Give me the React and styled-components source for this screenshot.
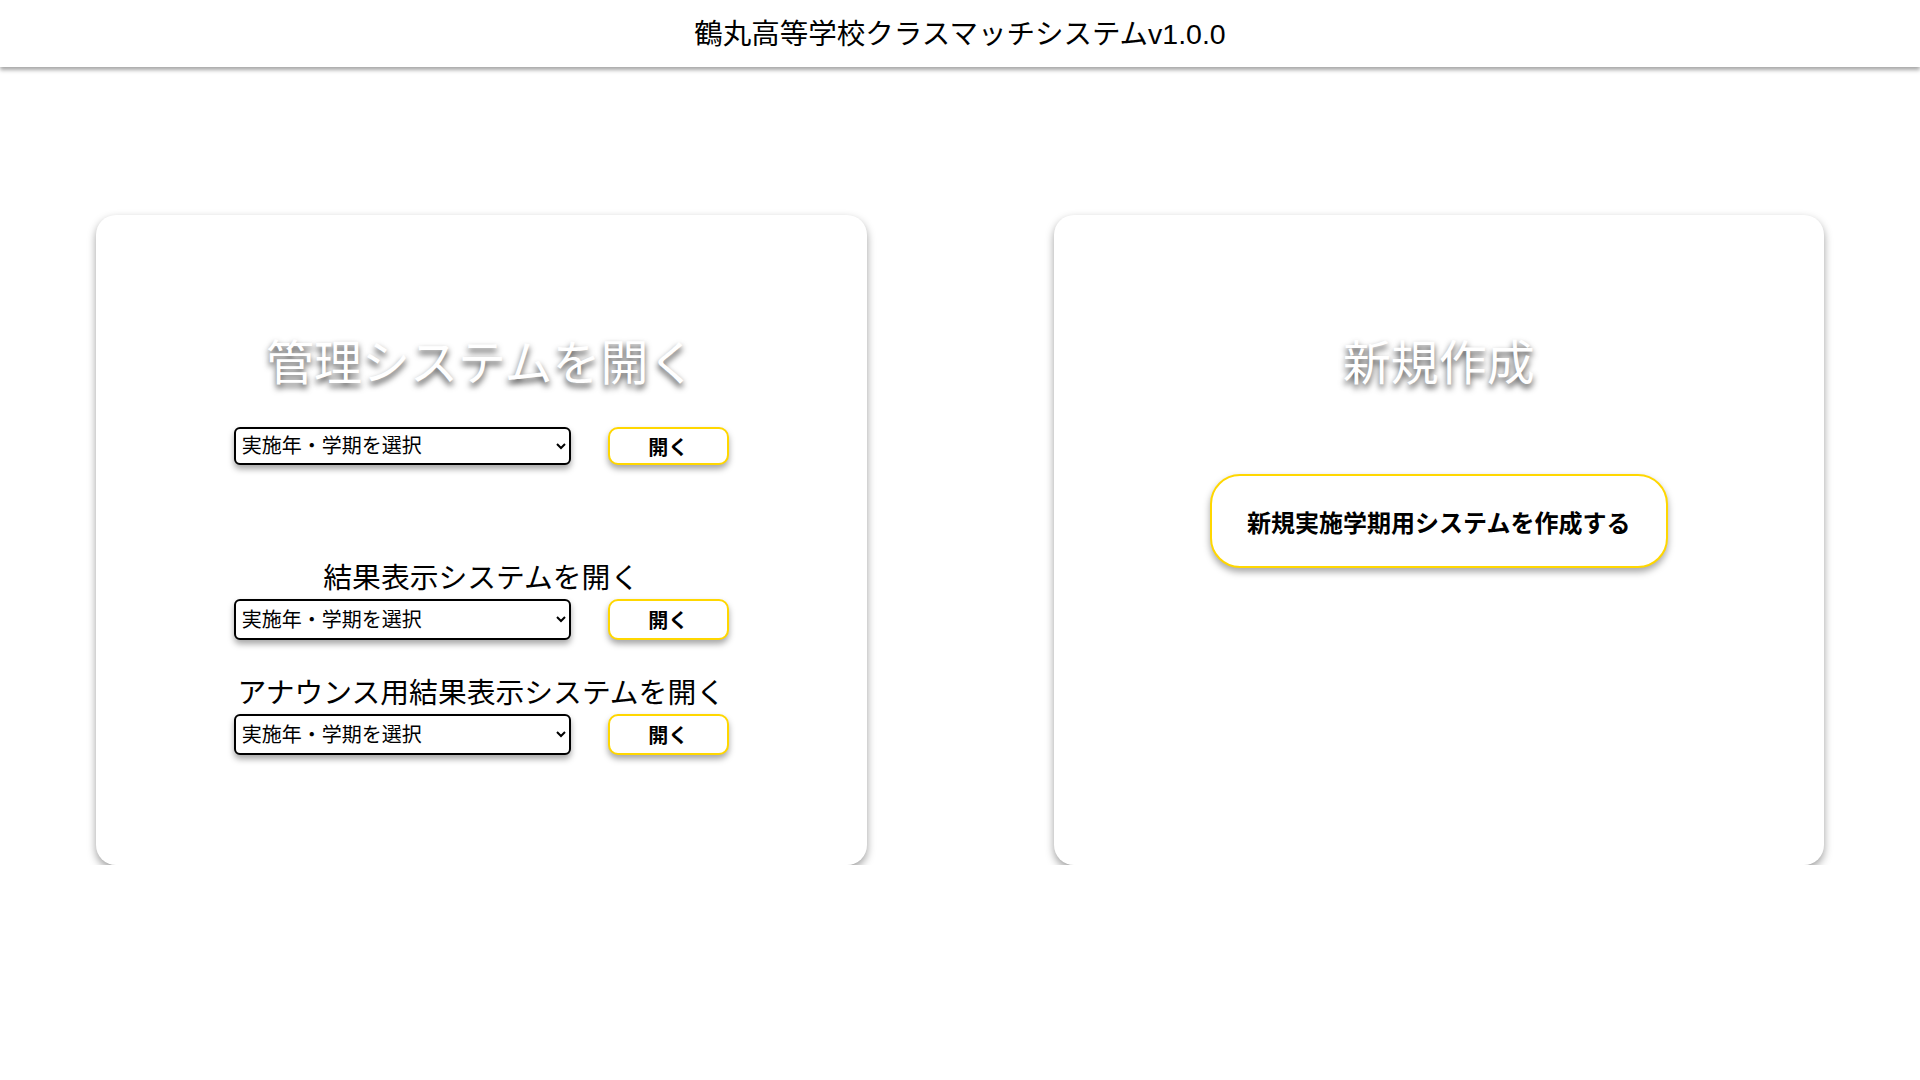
import styled, { createGlobalStyle } from 'styled-components';

const GlobalStyle = createGlobalStyle`
  html, body {
    margin: 0;
    padding: 0;
    background: #fff;
  }
  body {
    font-family: "Liberation Sans", "Noto Sans CJK JP", sans-serif;
    color: #000;
  }
`;

const Header = styled.header`
  height: 67px;
  display: flex;
  align-items: center;
  justify-content: center;
  background: #fff;
  box-shadow: 0 3px 4px rgba(0, 0, 0, 0.35);
`;

const HeaderTitle = styled.h1`
  margin: 0;
  font-size: 28.5px;
  font-weight: 400;
  line-height: 40px;
`;

const Main = styled.main`
  display: flex;
  gap: 187px;
  padding: 148px 96px 0;
`;

const Card = styled.section`
  flex: 1;
  height: 650px;
  box-sizing: border-box;
  padding-top: 114px;
  display: flex;
  flex-direction: column;
  align-items: center;
  background: #fff;
  border-radius: 20px;
  box-shadow: 0 4px 8px rgba(0, 0, 0, 0.38);
`;

const CardTitle = styled.h2`
  margin: 0;
  font-size: 48px;
  font-weight: 400;
  line-height: 70px;
  color: #fff;
  text-shadow: 0 4px 6px rgba(0, 0, 0, 0.75);
`;

const Label = styled.p`
  margin: ${(p) => p.$top}px 0 0;
  font-size: 28.8px;
  line-height: 42px;
`;

const Row = styled.div`
  display: flex;
  gap: 37px;
  margin-top: ${(p) => p.$top || 0}px;
`;

const Select = styled.select`
  width: 337px;
  height: ${(p) => p.$h}px;
  box-sizing: border-box;
  padding: 0 2px;
  font-family: inherit;
  font-size: 20px;
  color: #000;
  background: #fff;
  border: 2px solid #000;
  border-radius: 6px;
  box-shadow: 0 4px 6px rgba(0, 0, 0, 0.35);
`;

const OpenButton = styled.button`
  width: 121px;
  height: ${(p) => p.$h}px;
  box-sizing: border-box;
  font-family: inherit;
  font-size: 20px;
  font-weight: 700;
  color: #000;
  background: #fff;
  border: 2px solid #ffd700;
  border-radius: 10px;
  box-shadow: 0 4px 6px rgba(0, 0, 0, 0.35);
  cursor: pointer;
`;

const CreateButton = styled.button`
  margin-top: 75px;
  width: 458px;
  height: 94px;
  box-sizing: border-box;
  font-family: inherit;
  font-size: 24px;
  font-weight: 700;
  color: #000;
  background: #fff;
  border: 2px solid #ffd700;
  border-radius: 30px;
  box-shadow: 0 4px 7px rgba(0, 0, 0, 0.35);
  cursor: pointer;
`;

const OpenRow = ({ h, top }) => (
  <Row $top={top}>
    <Select $h={h} defaultValue="">
      <option value="">実施年・学期を選択</option>
    </Select>
    <OpenButton $h={h}>開く</OpenButton>
  </Row>
);

export default function App() {
  return (
    <>
      <GlobalStyle />
      <Header>
        <HeaderTitle>鶴丸高等学校クラスマッチシステムv1.0.0</HeaderTitle>
      </Header>
      <Main>
        <Card>
          <CardTitle>管理システムを開く</CardTitle>
          <OpenRow h={38} top={28} />
          <Label $top={92}>結果表示システムを開く</Label>
          <OpenRow h={41} />
          <Label $top={32}>アナウンス用結果表示システムを開く</Label>
          <OpenRow h={41} />
        </Card>
        <Card>
          <CardTitle>新規作成</CardTitle>
          <CreateButton>新規実施学期用システムを作成する</CreateButton>
        </Card>
      </Main>
    </>
  );
}
